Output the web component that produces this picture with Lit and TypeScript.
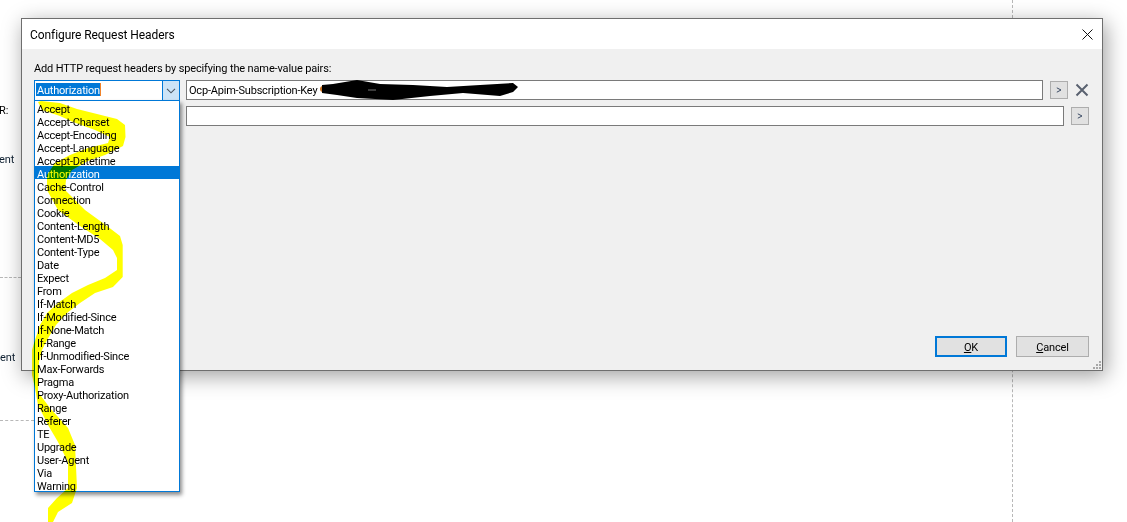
import { LitElement, html, css, svg } from "lit";
import { customElement } from "lit/decorators.js";

const HEADERS = ["Accept","Accept-Charset","Accept-Encoding","Accept-Language","Accept-Datetime","Authorization","Cache-Control","Connection","Cookie","Content-Length","Content-MD5","Content-Type","Date","Expect","From","If-Match","If-Modified-Since","If-None-Match","If-Range","If-Unmodified-Since","Max-Forwards","Pragma","Proxy-Authorization","Range","Referer","TE","Upgrade","User-Agent","Via","Warning"];

const YELLOW = "M41 101 L60 103 L77 109 L97 114 L117 119 L125 125 L125.5 137 L123 146 L105 155 L88 161 L72 170 L66 180 L65 190 L85 210 L107 226 L120 236 L122.7 245 L122.7 277 L113 287 L95 293 L80 303 L67 313 L56 325 L47 340 L42 350 L39 362 L38 392 L50 408 L68 428 L75 445 L77 488 L72 503 L58 512 L53 522 L48 522 L48 508 L57 498 L68 488 L68 462 L58 442 L48 425 L38 405 L35 388 L32 375 L32 350 L35 340 L40 325 L47 313 L58 303 L72 293 L88 285 L105 278 L117 270 L117 258 L113 250 L100 239 L80 226 L58 210 L47 190 L47 175 L55 163 L70 155 L88 148 L108 143 L110 137 L95 130 L73 122 L60 116 L42 110 L38 102 Z";
const BLACK = "M322 85 L333 84 L357 80 L380 84 L413 85 L447 87 L480 85 L513 83 L518 87 L513 92 L500 96 L463 93 L430 96 L393 100 L357 98 L337 95 L322 93 Z";

@customElement("app-root")
export class AppRoot extends LitElement {
  static styles = css`
    :host {
      display: block;
      position: relative;
      width: 1127px;
      height: 522px;
      overflow: hidden;
      background: #fff;
      isolation: isolate;
      box-sizing: border-box;
      padding: 18px 0 0 21px;
      font-family: Roboto, "Open Sans", sans-serif;
      font-size: 11px;
      letter-spacing: -0.14px;
      color: #000;
    }
    .vdash { position: absolute; left: 1012px; top: 0; height: 522px; border-left: 1px dashed #b8b8b8; }
    .hdash { position: absolute; left: 0; border-top: 1px dashed #b8b8b8; }
    .h1 { top: 277px; width: 21px; }
    .h2 { top: 420px; width: 34px; }
    .frag { position: absolute; left: 0; line-height: 14px; white-space: nowrap; }
    .f1 { top: 19px; left: -6px; color: #c8541c; }
    .f2 { top: 53px; left: -7px; color: #222; }
    .f3 { top: 104px; left: -1px; }
    .f4 { top: 153px; left: -1px; color: #123; }
    .f5 { top: 351px; left: 0; color: #123; }

    .dialog {
      position: relative;
      box-sizing: border-box;
      width: 1082px;
      height: 353px;
      border: 1px solid #6e6e6e;
      background: #f0f0f0;
      display: flex;
      flex-direction: column;
      box-shadow: 3px 5px 20px rgba(0,0,0,.38);
    }
    .titlebar {
      height: 30px;
      background: #fff;
      display: flex;
      align-items: center;
      justify-content: space-between;
      padding: 0 9px 0 8px;
      flex: none;
    }
    .title { font-size: 12px; letter-spacing: -0.08px; padding-top: 2px; }
    .close { width: 11px; height: 11px; display: block; }
    .body {
      flex: 1;
      display: flex;
      flex-direction: column;
      padding: 13px 13px 13px 12px;
      min-height: 0;
    }
    .label { line-height: 14px; height: 14px; margin-bottom: 4px; white-space: nowrap; }
    .row { display: flex; align-items: flex-start; margin-bottom: 5px; }
    .combo {
      position: relative;
      box-sizing: border-box;
      width: 146px;
      height: 21px;
      border: 1px solid #0078d7;
      background: #fff;
      flex: none;
      margin-right: 6px;
      display: flex;
    }
    .combo.plain { height: 20px; border-color: #7a7a7a; }
    .combo-value { flex: 1; padding: 2px 0 0 1px; }
    .sel {
      display: inline-block;
      background: #0078d7;
      color: #fff;
      line-height: 15px;
      height: 13px;
      padding-left: 1px;
      letter-spacing: -0.2px;
      border-right: 1px solid #f0832a;
      vertical-align: top;
    }
    .arrow {
      width: 16px;
      background: #cce4f7;
      border-left: 1px solid #0078d7;
      display: flex;
      align-items: center;
      justify-content: center;
    }
    .arrow svg { width: 10px; height: 6px; display: block; }
    .list {
      position: absolute;
      top: 100%;
      left: -1px;
      width: 146px;
      box-sizing: border-box;
      border: 1px solid #0078d7;
      background: #fff;
      box-shadow: 2px 3px 4px rgba(0,0,0,.45);
      z-index: 2;
      letter-spacing: -0.22px;
    }
    .item { height: 13px; line-height: 17px; padding-left: 2px; white-space: nowrap; }
    .item.on { background: #0078d7; color: #fff; }
    .field {
      box-sizing: border-box;
      flex: 1;
      height: 20px;
      border: 1px solid #7a7a7a;
      background: #fff;
      line-height: 20px;
      padding-left: 2px;
      white-space: nowrap;
      min-width: 0;
      letter-spacing: -0.2px;
    }
    .more {
      flex: none;
      box-sizing: border-box;
      width: 18px;
      height: 18px;
      margin: 1px 0 0 7px;
      border: 1px solid #adadad;
      background: #e1e1e1;
      display: flex;
      align-items: center;
      justify-content: center;
    }
    .more svg { width: 6px; height: 6px; display: block; }
    .del { flex: none; width: 14px; height: 14px; margin: 3px 0 0 7px; display: block; }
    .footer { margin-top: auto; display: flex; justify-content: flex-end; gap: 9px; }
    .btn {
      box-sizing: border-box;
      height: 21px;
      width: 73px;
      border: 1px solid #adadad;
      background: #e1e1e1;
      display: flex;
      align-items: center;
      justify-content: center;
    }
    .btn span { padding-top: 2px; }
    .btn.default { width: 72px; border: 2px solid #0078d7; }
    .grip { position: absolute; right: 1px; bottom: 1px; width: 9px; height: 9px; display: block; }
    .overlay { position: absolute; left: 0; top: 0; width: 1127px; height: 522px; pointer-events: none; z-index: 3; }
    .marker { mix-blend-mode: multiply; }
  `;

  private chevron() {
    return html`<svg viewBox="0 0 10 6"><path d="M1 .8 L5 4.8 L9 .8" fill="none" stroke="#4a5560" stroke-width="1.1"/></svg>`;
  }
  private gt() {
    return html`<svg viewBox="0 0 6 6"><path d="M.8 .8 L5 3 L.8 5.2" fill="none" stroke="#3c4c66" stroke-width="1"/></svg>`;
  }

  render() {
    const dots = [[7,1],[4,4],[7,4],[1,7],[4,7],[7,7]];
    return html`
      <div class="vdash"></div>
      <div class="hdash h1"></div>
      <div class="hdash h2"></div>
      <span class="frag f1">o</span>
      <span class="frag f2">O</span>
      <span class="frag f3">R:</span>
      <span class="frag f4">ent</span>
      <span class="frag f5">ent</span>

      <div class="dialog">
        <div class="titlebar">
          <span class="title">Configure Request Headers</span>
          <svg class="close" viewBox="0 0 11 11"><path d="M.5 .5 L10.5 10.5 M10.5 .5 L.5 10.5" stroke="#111" stroke-width="1" fill="none"/></svg>
        </div>
        <div class="body">
          <div class="label">Add HTTP request headers by specifying the name-value pairs:</div>
          <div class="row">
            <div class="combo">
              <div class="combo-value"><span class="sel">Authorization</span></div>
              <div class="arrow">${this.chevron()}</div>
              <div class="list">
                ${HEADERS.map((h) => html`<div class="item ${h === "Authorization" ? "on" : ""}">${h}</div>`)}
              </div>
            </div>
            <div class="field">Ocp-Apim-Subscription-Key</div>
            <div class="more">${this.gt()}</div>
            <svg class="del" viewBox="0 0 14 14"><path d="M1.5 1.5 L12.5 12.5 M12.5 1.5 L1.5 12.5" stroke="#5a6270" stroke-width="2" fill="none"/></svg>
          </div>
          <div class="row">
            <div class="combo plain"><div class="combo-value"></div></div>
            <div class="field"></div>
            <div class="more">${this.gt()}</div>
          </div>
          <div class="footer">
            <div class="btn default"><span><u>O</u>K</span></div>
            <div class="btn"><span><u>C</u>ancel</span></div>
          </div>
        </div>
        <svg class="grip" viewBox="0 0 9 9">
          ${dots.map(([x, y]) => svg`<rect x=${x} y=${y} width="2" height="2" fill="#a8a8a8"/>`)}
        </svg>
      </div>

      <svg class="overlay" viewBox="0 0 1127 522"><circle cx="323" cy="89" r="3" fill="#c8701e"/><path d=${BLACK} fill="#000"/><path d="M368 90 h8" stroke="#777" stroke-width="1"/></svg>
      <svg class="overlay marker" viewBox="0 0 1127 522"><path d=${YELLOW} fill="#ffff00"/></svg>
    `;
  }
}
